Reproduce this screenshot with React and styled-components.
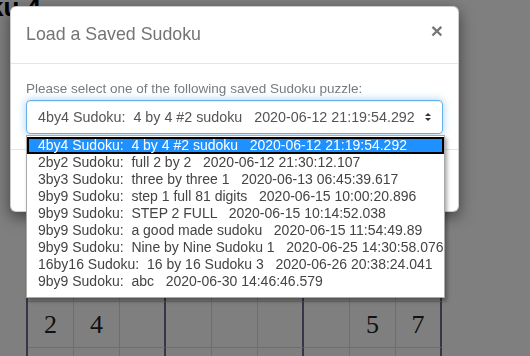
import React from 'react';
import styled, { createGlobalStyle } from 'styled-components';

const Global = createGlobalStyle`
  html, body { margin: 0; padding: 0; background: #fff; overflow: hidden; }
  body { font-family: "Liberation Sans", Arial, sans-serif; }
  * { box-sizing: border-box; }
`;

const Page = styled.div`
  width: 530px;
  height: 356px;
  position: relative;
  overflow: hidden;
`;

const PageTitle = styled.h1`
  margin: -6px 0 0 -76px;
  font: bold 26px/1 "Liberation Sans", Arial, sans-serif;
  color: #000;
  white-space: nowrap;
`;

const BoardWrap = styled.div`
  padding: 96px 0 0 26px;
`;

const Board = styled.div`
  display: grid;
  grid-template-columns: repeat(9, 46px);
  grid-auto-rows: 46px;
  width: max-content;
  border-left: 2px solid #6c6c90;
  border-top: 2px solid #6c6c90;
`;

const Cell = styled.div`
  display: flex;
  align-items: center;
  justify-content: center;
  border-right: ${(p) => (p.$thickRight ? '2px solid #6c6c90' : '1px solid #dcdcdc')};
  border-bottom: ${(p) => (p.$thickBottom ? '2px solid #6c6c90' : '1px solid #dcdcdc')};
  font: 26px "Liberation Serif", "Times New Roman", serif;
  color: #222;
`;

const Backdrop = styled.div`
  position: fixed;
  inset: 0;
  background: rgba(0, 0, 0, 0.5);
`;

const Modal = styled.div`
  position: absolute;
  top: 6px;
  left: 10px;
  width: 449px;
  background: #fff;
  border: 1px solid rgba(0, 0, 0, 0.2);
  border-radius: 6px;
  box-shadow: 0 5px 15px rgba(0, 0, 0, 0.5);
`;

const Header = styled.div`
  display: flex;
  justify-content: space-between;
  align-items: flex-start;
  padding: 15px;
  border-bottom: 1px solid #e5e5e5;
`;

const Title = styled.h4`
  margin: 0;
  font-size: 17.8px;
  font-weight: normal;
  line-height: 25.7px;
  color: #747474;
`;

const Close = styled.button`
  margin-top: -2px;
  padding: 0;
  border: 0;
  background: transparent;
  font: bold 21px/1 "Liberation Sans", Arial, sans-serif;
  color: #777;
  cursor: pointer;
`;

const Body = styled.div`
  padding: 15px;
`;

const Label = styled.div`
  font-size: 13.5px;
  line-height: 20px;
  color: #7a7a7a;
  margin-bottom: 1px;
`;

const Field = styled.div`
  position: relative;
`;

const SelectBox = styled.div`
  display: flex;
  align-items: center;
  justify-content: space-between;
  height: 34px;
  padding: 0 10px 0 11px;
  border: 1px solid #66afe9;
  border-radius: 4px;
  box-shadow: inset 0 1px 1px rgba(0, 0, 0, 0.075), 0 0 8px rgba(102, 175, 233, 0.6);
  font-size: 14.3px;
  color: #555;
`;

const SelectText = styled.span`
  white-space: pre;
  padding-top: 1px;
`;

const Popup = styled.ul`
  position: absolute;
  top: 35px;
  left: 0;
  width: 419px;
  margin: 0;
  padding: 1px 0 7px;
  list-style: none;
  background: #fff;
  border: 1px solid #a9a9a9;
  box-shadow: 2px 3px 4px rgba(0, 0, 0, 0.35);
  z-index: 2;
`;

const Option = styled.li`
  height: 17px;
  line-height: 17px;
  padding-left: 11px;
  font-size: 14px;
  white-space: pre;
  color: ${(p) => (p.$active ? '#fff' : '#444')};
  background: ${(p) => (p.$active ? '#1e90ff' : 'transparent')};
  box-shadow: ${(p) => (p.$active ? 'inset 0 0 0 2px #000' : 'none')};
`;

const Footer = styled.div`
  height: 62px;
  border-top: 1px solid #e5e5e5;
`;

const Arrows = () => (
  <svg width="8" height="10" viewBox="0 0 8 10">
    <path d="M1 4 L4 1 L7 4 Z" fill="#333" />
    <path d="M1 6 L4 9 L7 6 Z" fill="#333" />
  </svg>
);

const options = [
  '4by4 Sudoku:  4 by 4 #2 sudoku   2020-06-12 21:19:54.292',
  '2by2 Sudoku:  full 2 by 2   2020-06-12 21:30:12.107',
  '3by3 Sudoku:  three by three 1   2020-06-13 06:45:39.617',
  '9by9 Sudoku:  step 1 full 81 digits   2020-06-15 10:00:20.896',
  '9by9 Sudoku:  STEP 2 FULL   2020-06-15 10:14:52.038',
  '9by9 Sudoku:  a good made sudoku   2020-06-15 11:54:49.89',
  '9by9 Sudoku:  Nine by Nine Sudoku 1   2020-06-25 14:30:58.076',
  '16by16 Sudoku:  16 by 16 Sudoku 3   2020-06-26 20:38:24.041',
  '9by9 Sudoku:  abc   2020-06-30 14:46:46.579',
];

const rows = Array.from({ length: 9 }, (_, r) =>
  r === 4 ? ['2', '4', '', '', '', '', '', '5', '7'] : Array(9).fill('')
);

export default function App() {
  return (
    <Page>
      <Global />
      <PageTitle>Sudoku 4</PageTitle>
      <BoardWrap>
        <Board>
          {rows.map((row, r) =>
            row.map((v, c) => (
              <Cell key={`${r}-${c}`} $thickRight={c % 3 === 2} $thickBottom={r % 3 === 2}>
                {v}
              </Cell>
            ))
          )}
        </Board>
      </BoardWrap>
      <Backdrop />
      <Modal role="dialog">
        <Header>
          <Title>Load a Saved Sudoku</Title>
          <Close aria-label="Close">×</Close>
        </Header>
        <Body>
          <Label>Please select one of the following saved Sudoku puzzle:</Label>
          <Field>
            <SelectBox role="combobox">
              <SelectText>{options[0]}</SelectText>
              <Arrows />
            </SelectBox>
            <Popup role="listbox">
              {options.map((o, i) => (
                <Option key={i} $active={i === 0}>
                  {o}
                </Option>
              ))}
            </Popup>
          </Field>
        </Body>
        <Footer />
      </Modal>
    </Page>
  );
}
